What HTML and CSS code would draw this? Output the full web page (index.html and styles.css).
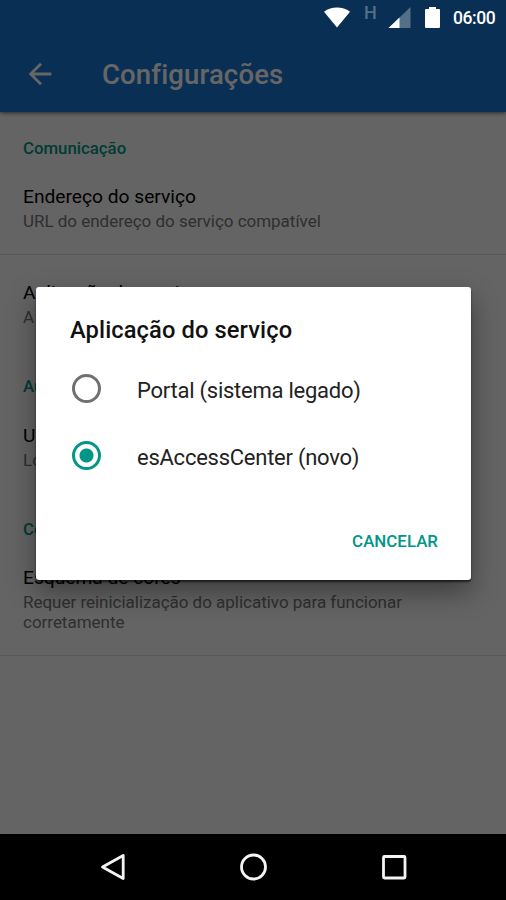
FILE: index.html
```html
<!DOCTYPE html>
<html lang="pt-BR">
<head>
<meta charset="utf-8">
<title>Configurações</title>
<link rel="stylesheet" href="styles.css">
</head>
<body>
<div class="phone">
  <div class="app">
    <header class="toolbar">
      <svg class="back" viewBox="0 0 24 24"><path d="M20 11H7.83l5.59-5.59L12 4l-8 8 8 8 1.41-1.41L7.83 13H20v-2z"/></svg>
      <h1>Configurações</h1>
    </header>
    <main>
      <h2>Comunicação</h2>
      <section class="item ruled">
        <h3>Endereço do serviço</h3>
        <p>URL do endereço do serviço compatível</p>
      </section>
      <section class="item">
        <h3>Aplicação do serviço</h3>
        <p>A</p>
      </section>
      <h2>Autenticação</h2>
      <section class="item">
        <h3>Usuário</h3>
        <p>Login</p>
      </section>
      <h2>Cores</h2>
      <section class="item ruled">
        <h3>Esquema de cores</h3>
        <p>Requer reinicialização do aplicativo para funcionar<br>corretamente</p>
      </section>
    </main>
    <div class="scrim">
      <div class="dialog" role="dialog">
        <h4>Aplicação do serviço</h4>
        <label class="option"><span class="radio"></span><span class="label">Portal (sistema legado)</span></label>
        <label class="option"><span class="radio checked"></span><span class="label">esAccessCenter (novo)</span></label>
        <button>CANCELAR</button>
      </div>
    </div>
    <div class="status">
      <svg class="wifi" viewBox="0 0 27 21"><path d="M0 4.5C8-1.2 19-1.2 27 4.5L13.5 21z"/></svg>
      <span class="network">H</span>
      <svg class="signal" viewBox="0 0 22 21"><path class="weak" d="M0 21L22 0v21z"/><path d="M0 21L11 10.5V21z"/></svg>
      <svg class="battery" viewBox="0 0 15 21"><path d="M1 2h3V0h7v2h3q1 0 1 1v17q0 1-1 1H1q-1 0-1-1V3q0-1 1-1z"/></svg>
      <span class="time">06:00</span>
    </div>
  </div>
  <nav>
    <svg viewBox="0 0 30 30"><path d="M26.2 3.5v23L5.5 15z"/></svg>
    <svg viewBox="0 0 30 30"><circle cx="15.5" cy="15" r="12"/></svg>
    <svg viewBox="0 0 30 30"><rect x="4.5" y="4.5" width="21.5" height="21.5" rx="1"/></svg>
  </nav>
</div>
</body>
</html>
```

FILE: styles.css
```css
* { box-sizing: border-box; margin: 0; padding: 0; }
body { font-family: Roboto, "Liberation Sans", sans-serif; background: #000; }
.phone { width: 506px; height: 900px; display: flex; flex-direction: column; overflow: hidden; }
.app { position: relative; height: 834px; background: #fafafa; overflow: hidden; }
.toolbar {
  height: 112px; padding: 38px 0 0 23px; display: flex; align-items: center; gap: 45px;
  background: #1976d2; box-shadow: 0 1px 4px rgba(0, 0, 0, .6);
}
.back { width: 34px; height: 34px; margin-top: -2px; fill: #fff; }
h1 { font-size: 27.5px; font-weight: 500; line-height: 36px; color: #fff; letter-spacing: .15px; }
main { padding-top: 1px; }
h2 { height: 47px; padding: 25px 23px 0; font-size: 16.8px; line-height: 20px; font-weight: 500; color: #009688; }
main h2:first-child { height: 46px; }
.item { height: 96px; padding: 26px 23px 0; }
.item:last-child { height: 115px; padding-top: 25px; }
.item.ruled { border-bottom: 1px solid #dcdcdc; }
h3 { font-size: 19.2px; line-height: 24px; font-weight: 400; color: #000; }
.item p { margin-top: 2px; font-size: 17px; line-height: 20px; color: #767676; letter-spacing: -.02px; }
.scrim {
  position: absolute; inset: 0; padding: 287px 35px 0 36px;
  background: rgba(0, 0, 0, .6);
}
.dialog {
  height: 293px; padding: 25px 34px 0; display: flex; flex-direction: column;
  background: #fff; border-radius: 3px;
  box-shadow: 0 2px 2px rgba(0, 0, 0, .6), 0 12px 28px rgba(0, 0, 0, .4);
}
h4 { height: 43px; padding-top: 1px; font-size: 23.7px; line-height: 34px; font-weight: 500; color: #111; letter-spacing: .1px; }
.option { height: 67px; display: flex; align-items: center; gap: 36px; font-size: 22px; letter-spacing: -.25px; color: #222; }
.option .label { padding-top: 4px; }
.radio { width: 29px; height: 29px; margin-left: 2px; border: 3px solid #707070; border-radius: 50%; }
.radio.checked { border-color: #009688; background: radial-gradient(circle, #009688 6.5px, transparent 7.5px); }
button {
  align-self: flex-end; margin: 40px -1px 0 0; border: 0; background: none;
  font: 500 16.9px/24px Roboto, sans-serif; color: #009688;
}
.status { position: absolute; top: 0; left: 0; right: 0; height: 35px; color: #fff; fill: #fff; }
.status > * { position: absolute; top: 7px; }
.wifi { left: 324px; width: 26px; height: 21px; }
.network { left: 364px; margin-top: -4px; font-size: 18px; line-height: 19px; font-weight: 500; color: #547089; }
.signal { left: 388px; width: 23px; height: 21px; }
.signal .weak { fill: #547089; }
.battery { left: 425px; width: 15px; height: 21px; }
.time { left: 453px; font-size: 17.5px; line-height: 22px; font-weight: 500; letter-spacing: -.4px; }
nav { height: 66px; padding: 0 97px; display: flex; align-items: center; justify-content: space-between; background: #000; }
nav svg { width: 30px; height: 30px; fill: none; stroke: #f4f4f4; stroke-width: 2.8; stroke-linejoin: round; }
```
